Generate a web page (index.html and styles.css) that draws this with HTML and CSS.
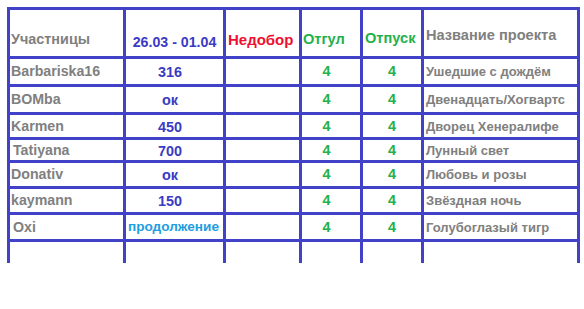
FILE: index.html
```html
<!DOCTYPE html>
<html lang="ru">
<head>
<meta charset="utf-8">
<link rel="stylesheet" href="styles.css">
</head>
<body>
<div class="sheet">
  <div class="cell head name">Участницы</div>
  <div class="cell head date">26.03 - 01.04</div>
  <div class="cell head red">Недобор</div>
  <div class="cell head green-h">Отгул</div>
  <div class="cell head green-h">Отпуск</div>
  <div class="cell head proj-h">Название проекта</div>

  <div class="cell name">Barbariska16</div>
  <div class="cell val">316</div>
  <div class="cell"></div>
  <div class="cell num">4</div>
  <div class="cell num">4</div>
  <div class="cell proj">Ушедшие с дождём</div>

  <div class="cell name">BOMba</div>
  <div class="cell val">ок</div>
  <div class="cell"></div>
  <div class="cell num">4</div>
  <div class="cell num">4</div>
  <div class="cell proj">Двенадцать/Хогвартс</div>

  <div class="cell name">Karmen</div>
  <div class="cell val">450</div>
  <div class="cell"></div>
  <div class="cell num">4</div>
  <div class="cell num">4</div>
  <div class="cell proj">Дворец Хенералифе</div>

  <div class="cell name indent">Tatiyana</div>
  <div class="cell val">700</div>
  <div class="cell"></div>
  <div class="cell num">4</div>
  <div class="cell num">4</div>
  <div class="cell proj">Лунный свет</div>

  <div class="cell name">Donativ</div>
  <div class="cell val">ок</div>
  <div class="cell"></div>
  <div class="cell num">4</div>
  <div class="cell num">4</div>
  <div class="cell proj">Любовь и розы</div>

  <div class="cell name">kaymann</div>
  <div class="cell val">150</div>
  <div class="cell"></div>
  <div class="cell num">4</div>
  <div class="cell num">4</div>
  <div class="cell proj">Звёздная ночь</div>

  <div class="cell name indent">Oxi</div>
  <div class="cell val cont">продолжение</div>
  <div class="cell"></div>
  <div class="cell num">4</div>
  <div class="cell num">4</div>
  <div class="cell proj">Голубоглазый тигр</div>

  <div class="cell"></div>
  <div class="cell"></div>
  <div class="cell"></div>
  <div class="cell"></div>
  <div class="cell"></div>
  <div class="cell"></div>
</div>
</body>
</html>
```

FILE: styles.css
```css
html, body {
  margin: 0;
  padding: 0;
  background: #ffffff;
}

.sheet {
  margin: 7px 0 0 7px;
  display: grid;
  grid-template-columns: 113px 97px 73px 58px 58px 153px;
  grid-template-rows: 46px 25px 25px 22px 20px 23px 23px 24px 21px;
  gap: 3px;
  padding: 3px 3px 0 3px;
  background: #4242c9;
  width: max-content;
  font-family: "Liberation Sans", Arial, sans-serif;
  font-weight: bold;
  font-size: 14px;
  line-height: 1;
}

.cell {
  background: #ffffff;
  display: flex;
  align-items: center;
  white-space: nowrap;
  overflow: hidden;
}

.head {
  align-items: flex-end;
  padding-bottom: 10px;
}

.name {
  color: #808080;
  padding-left: 1px;
  font-size: 14.2px;
}

.head.name {
  font-size: 14.4px;
}

.indent {
  padding-left: 3px;
}

.date {
  color: #3b3bc4;
  justify-content: center;
  padding-bottom: 7px;
  font-size: 14.2px;
}

.red {
  color: #ef1030;
  padding-left: 2px;
  padding-bottom: 9px;
  font-size: 15px;
}

.green-h {
  color: #22b14c;
  padding-left: 1px;
  padding-bottom: 9px;
  font-size: 14.6px;
}

.head.green-h + .green-h {
  padding-left: 2px;
  padding-bottom: 10px;
}

.proj-h {
  color: #808080;
  padding-left: 2px;
  padding-bottom: 13px;
  font-size: 14.6px;
}

.val {
  color: #3b3bc4;
  justify-content: center;
  padding-right: 9px;
  padding-top: 2px;
  font-size: 14.4px;
}

.cont {
  color: #1e9ee2;
  font-size: 13.6px;
  padding-right: 2px;
  padding-top: 0;
}

.num {
  color: #22b14c;
  justify-content: center;
  padding-right: 9px;
  font-size: 14.4px;
}

.num + .num {
  padding-right: 0;
}

.proj {
  color: #808080;
  padding-left: 2px;
  font-size: 13px;
}
```
